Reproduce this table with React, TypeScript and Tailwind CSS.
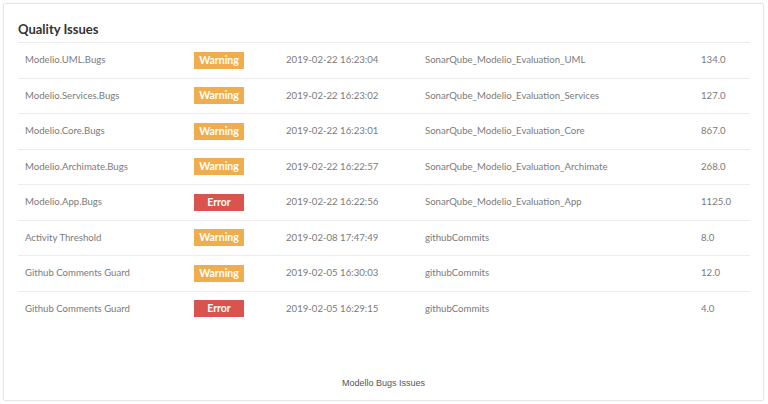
const rows = [
  { name: "Modelio.UML.Bugs", level: "Warning", date: "2019-02-22 16:23:04", source: "SonarQube_Modelio_Evaluation_UML", value: "134.0" },
  { name: "Modelio.Services.Bugs", level: "Warning", date: "2019-02-22 16:23:02", source: "SonarQube_Modelio_Evaluation_Services", value: "127.0" },
  { name: "Modelio.Core.Bugs", level: "Warning", date: "2019-02-22 16:23:01", source: "SonarQube_Modelio_Evaluation_Core", value: "867.0" },
  { name: "Modelio.Archimate.Bugs", level: "Warning", date: "2019-02-22 16:22:57", source: "SonarQube_Modelio_Evaluation_Archimate", value: "268.0" },
  { name: "Modelio.App.Bugs", level: "Error", date: "2019-02-22 16:22:56", source: "SonarQube_Modelio_Evaluation_App", value: "1125.0" },
  { name: "Activity Threshold", level: "Warning", date: "2019-02-08 17:47:49", source: "githubCommits", value: "8.0" },
  { name: "Github Comments Guard", level: "Warning", date: "2019-02-05 16:30:03", source: "githubCommits", value: "12.0" },
  { name: "Github Comments Guard", level: "Error", date: "2019-02-05 16:29:15", source: "githubCommits", value: "4.0" },
];

export default function App() {
  return (
    <div className="w-[768px] h-[404px] bg-white p-[3px] pb-[3px] pr-[4px]">
      <div className="h-full border border-[#e6e6e6] rounded-[2px] shadow-[0_0_2px_rgba(0,0,0,0.06)] flex flex-col px-[14px] font-['Lato',sans-serif]">
        <h2 className="pt-[17px] h-[38px] text-[13px] leading-[17px] font-bold text-[#333]">
          Quality Issues
        </h2>
        <div className="mr-[-1px]">
          {rows.map((r, i) => (
            <div
              key={i}
              className="grid grid-cols-[176px_92px_139px_276px_1fr] items-center h-[35.5px] border-t border-[#ececec] text-[9.6px] text-[#7a7a7a]"
            >
              <div className="pl-[7px]">{r.name}</div>
              <div>
                <span
                  className={
                    "inline-flex items-center justify-center w-[50px] h-[17px] pt-[1px] text-white font-bold text-[10.5px] " +
                    (r.level === "Error" ? "bg-[#d9534f]" : "bg-[#f0ad4e]")
                  }
                >
                  {r.level}
                </span>
              </div>
              <div>{r.date}</div>
              <div>{r.source}</div>
              <div>{r.value}</div>
            </div>
          ))}
        </div>
        <div className="flex-1" />
        <div className="text-center text-[9px] text-[#555] font-['Liberation_Sans',sans-serif] pb-[10px]">
          Modello Bugs Issues
        </div>
      </div>
    </div>
  );
}
